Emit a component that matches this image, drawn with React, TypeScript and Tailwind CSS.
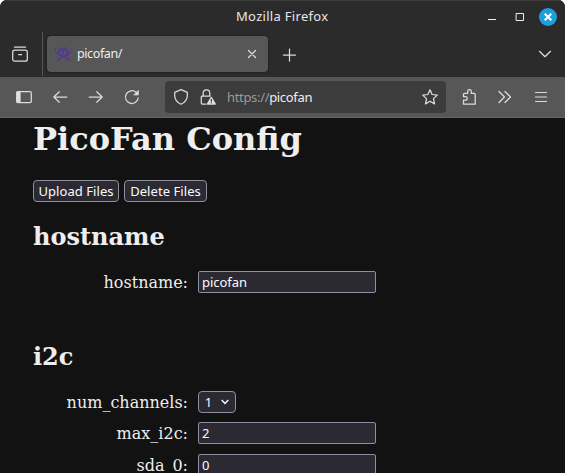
import React from "react";

const ui = "font-['Noto_Sans',sans-serif]";

function Icon({ children, className = "" }: { children: React.ReactNode; className?: string }) {
  return (
    <svg
      viewBox="0 0 16 16"
      className={`size-4 shrink-0 overflow-visible fill-none stroke-[#dcdcdc] stroke-[1.25] ${className}`}
      strokeLinecap="round"
      strokeLinejoin="round"
    >
      {children}
    </svg>
  );
}

function TitleBar() {
  return (
    <div className="flex h-8 items-center border-t border-[#3d3d3d] pr-2">
      <div className="-mt-[2px] ml-[236px] w-[160px] text-[13px] leading-4 tracking-[0.3px] whitespace-nowrap text-[#e6e6e6]">Mozilla Firefox</div>
      <Icon className="ml-[88px]">
        <path d="M4 10.5h8" stroke="#eee" strokeWidth="1" strokeLinecap="butt" />
      </Icon>
      <Icon className="ml-[12px]">
        <path d="M4.5 4.5h7v7h-7z" stroke="#eee" strokeWidth="1" strokeLinejoin="miter" />
      </Icon>
      <div className="ml-[11px] flex size-[18px] shrink-0 items-center justify-center rounded-full bg-[#1f9ede]">
        <svg viewBox="0 0 8 8" className="size-2 stroke-white stroke-2">
          <path d="M.7.7l6.6 6.6M7.3.7L.7 7.3" />
        </svg>
      </div>
    </div>
  );
}

function TabBar() {
  return (
    <div className="flex h-[45px]">
      <div className="flex h-11 w-[43px] items-center border-r border-[#555] pl-3">
        <Icon>
          <rect x=".7" y="4.2" width="14.6" height="11" rx="2" />
          <path d="M2.5 1.2h11M6.7 8.7h2.8" />
        </Icon>
      </div>
      <div className="mt-1 ml-1 flex h-9 w-[221px] items-center rounded-[4px] bg-[#575757] pl-2 shadow-[0_0_2px_#151515]">
        <svg viewBox="0 0 16 14" className="h-[14px] w-4 fill-[#503f83]">
          <path d="M0 1h1v4h2V2h2V0h2v1h2V0h2v2h2v3h2V1h1v5h-1v1h-1v2h-2v2h2v1h1v2h-2v-1h-2v-2H6v2H4v1H2v-2h1v-1h2V9H3V7H1V6H0z" />
          <path d="M5.500 4H7v3H5.500zM9 4h1.500v3H9z" fill="#605776" />
        </svg>
        <span className="ml-[6px] w-[154px] text-[12.5px] leading-4 tracking-[-0.4px] text-[#eee]">picofan/</span>
        <Icon className="ml-[13px]">
          <path d="M4.5 4.5l7 7m0-7l-7 7" />
        </Icon>
      </div>
      <Icon className="mt-[15px] ml-[13px]">
        <path d="M8.5 2v12m-6-6h12" />
      </Icon>
      <Icon className="mt-[14px] ml-[240px]">
        <path d="M2.5 5.3L8 10.7l5.5-5.4" />
      </Icon>
    </div>
  );
}

function NavBar() {
  return (
    <div className="flex h-[41px] items-center border-b border-[#666] bg-[#575757] pl-4">
      <Icon>
        <rect x=".7" y="2.5" width="14.6" height="11" rx="1.3" />
        <path d="M1 3h3v10H1z" fill="#e2e2e2" />
      </Icon>
      <Icon className="ml-5">
        <path d="M14.8 8H1.8m5.5-5.2L1.8 8l5.5 5.2" />
      </Icon>
      <Icon className="ml-5">
        <path d="M1.2 8h13M8.7 2.8L14.2 8l-5.5 5.2" />
      </Icon>
      <Icon className="ml-5">
        <path d="M14.2 9A6.4 6.4 0 1 1 12 3.2l1.5 1.3" />
        <path d="M14.3 1.7v4.2h-4.2z" fill="#e2e2e2" strokeWidth=".8" />
      </Icon>
      <div className="ml-[25px] flex h-8 w-[281px] shrink-0 items-center rounded-[4px] bg-[#3c3c3c] pl-2">
        <Icon className="stroke-[#c9c9c9]">
          <path d="M8 .7L14.300 3.300v3.200c0 4-2.500 7-6.300 8.800C4.200 13.500 1.700 10.500 1.700 6.500V3.300z" />
        </Icon>
        <Icon className="ml-[11px] stroke-[#c9c9c9]">
          <path d="M3.200 7V4.200a3.300 3.300 0 0 1 6.600 0V7M5.800 15H2.300a1 1 0 0 1-1-1V8a1 1 0 0 1 1-1h7.900" />
          <path d="M11.300 8.300l4 6.700H7.300z" fill="#e2e2e2" />
          <path d="M11.300 10.300v2m0 1.500v.2" stroke="#3c3c3c" strokeWidth="1.200" />
        </Icon>
        <span className="ml-[11px] w-[195px] text-[13px] leading-4 tracking-[-0.33px] text-[#9b9b9b]">
          https://<span className="text-[#eee]">picofan</span>
        </span>
        <Icon className="stroke-[#c9c9c9]">
          <path d="M8 .8l2.100 4.700 5.200.6-3.800 3.500 1 5.300L8 12.300l-4.500 2.600 1-5.300L.7 6.100l5.200-.6z" />
        </Icon>
      </div>
      <Icon className="ml-4">
        <path d="M1.700 15.200H13.200V5.300a1 1 0 0 0-1-1H9.300V2.500a1.800 1.800 0 0 0-3.600 0v1.800H2.500a1 1 0 0 0-1 1v2.400h2a1.700 1.700 0 0 1 0 3.500h-2v3.800z" />
      </Icon>
      <Icon className="ml-[19px]">
        <path d="M2 2.500L7.500 8 2 13.500M8 2.500L13.500 8 8 13.500" />
      </Icon>
      <Icon className="ml-5">
        <path d="M2.500 3.500h11m-11 4.500h11m-11 4.500h11" strokeWidth="1.100" />
      </Icon>
    </div>
  );
}

function Row({ label, children }: { label: string; children: React.ReactNode }) {
  return (
    <div className="flex h-[22px] shrink-0 items-center">
      <label className="w-[188px] pt-[2px] text-right text-base leading-5 whitespace-nowrap">{label}</label>
      <div className="ml-[10px]">{children}</div>
    </div>
  );
}

function Field({ value }: { value: string }) {
  return (
    <input
      defaultValue={value}
      className={`block h-[22px] w-[178px] rounded-[2px] border border-[#8f8f9d] bg-[#2b2a33] px-[3px] text-[13px] leading-4 tracking-[-0.04px] text-[#fbfbfe] outline-none ${ui}`}
    />
  );
}

const button = `flex h-[22px] items-center justify-center rounded-[4px] border border-[#8f8f9d] bg-[#2b2a33] text-[13px] leading-4 tracking-[0.06px] whitespace-nowrap text-[#fbfbfe] ${ui}`;

export default function App() {
  return (
    <div className="h-[473px] w-[565px] overflow-hidden bg-white">
      <div className="flex h-full flex-col overflow-hidden rounded-t-[7px] bg-[#121212]">
        <header className={`shrink-0 bg-[#2b2b2b] ${ui}`}>
          <TitleBar />
          <TabBar />
          <NavBar />
        </header>
        <main className="min-h-0 flex-1 overflow-hidden font-['DejaVu_Serif',serif] text-[#eee]">
          <h1 className="mt-[2px] ml-[33px] text-[32px] leading-[38px] font-bold">PicoFan Config</h1>
          <div className="mt-[22px] ml-[33px] flex gap-[5px]">
            <button className={`w-[86px] ${button}`}>Upload Files</button>
            <button className={`w-[83px] ${button}`}>Delete Files</button>
          </div>
          <h2 className="mt-[21px] ml-[33px] text-2xl leading-7 font-bold">hostname</h2>
          <div className="mt-5">
            <Row label="hostname:"><Field value="picofan" /></Row>
          </div>
          <h2 className="mt-[50px] ml-[33px] text-2xl leading-7 font-bold">i2c</h2>
          <div className="mt-5">
            <Row label="num_channels:">
              <button className={`w-[38px] gap-[9px] ${button}`}>
                <span>1</span>
                <svg viewBox="0 0 8 6" className="h-[6px] w-2 fill-none stroke-[#fbfbfe] stroke-[1.5]">
                  <path d="M.7 1L4 4.400 7.300 1" />
                </svg>
              </button>
            </Row>
          </div>
          <div className="mt-[9px]">
            <Row label="max_i2c:"><Field value="2" /></Row>
          </div>
          <div className="mt-[10px]">
            <Row label="sda_0:"><Field value="0" /></Row>
          </div>
        </main>
      </div>
    </div>
  );
}
